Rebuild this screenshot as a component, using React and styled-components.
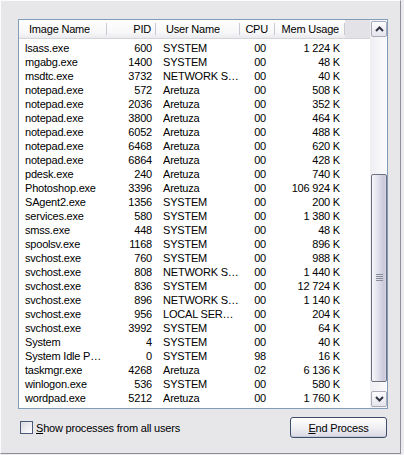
import React from "react";
import styled, { createGlobalStyle } from "styled-components";

const GlobalStyle = createGlobalStyle`
  html, body {
    margin: 0;
    padding: 0;
    background: #ececef;
  }
  body {
    font-family: "Liberation Sans", Arial, sans-serif;
    font-size: 11px;
    letter-spacing: -0.2px;
    color: #000;
  }
`;

// colonnes du tableau : largeur, alignement, marges du titre et des lignes
const columns = [
  { key: "name", title: "Image Name", width: 88, align: "left", headPad: 10, rowPad: 6 },
  { key: "pid", title: "PID", width: 49, align: "right", headPad: 5, rowPad: 4 },
  { key: "user", title: "User Name", width: 84, align: "left", headPad: 10, rowPad: 7 },
  { key: "cpu", title: "CPU", width: 35, align: "right", headPad: 7, rowPad: 9 },
  { key: "mem", title: "Mem Usage", width: 70, align: "right", headPad: 6, rowPad: 5 },
];

const processes = [
  ["lsass.exe", "600", "SYSTEM", "00", "1 224 K"],
  ["mgabg.exe", "1400", "SYSTEM", "00", "48 K"],
  ["msdtc.exe", "3732", "NETWORK S…", "00", "40 K"],
  ["notepad.exe", "572", "Aretuza", "00", "508 K"],
  ["notepad.exe", "2036", "Aretuza", "00", "352 K"],
  ["notepad.exe", "3800", "Aretuza", "00", "464 K"],
  ["notepad.exe", "6052", "Aretuza", "00", "488 K"],
  ["notepad.exe", "6468", "Aretuza", "00", "620 K"],
  ["notepad.exe", "6864", "Aretuza", "00", "428 K"],
  ["pdesk.exe", "240", "Aretuza", "00", "740 K"],
  ["Photoshop.exe", "3396", "Aretuza", "00", "106 924 K"],
  ["SAgent2.exe", "1356", "SYSTEM", "00", "200 K"],
  ["services.exe", "580", "SYSTEM", "00", "1 380 K"],
  ["smss.exe", "448", "SYSTEM", "00", "48 K"],
  ["spoolsv.exe", "1168", "SYSTEM", "00", "896 K"],
  ["svchost.exe", "760", "SYSTEM", "00", "988 K"],
  ["svchost.exe", "808", "NETWORK S…", "00", "1 440 K"],
  ["svchost.exe", "836", "SYSTEM", "00", "12 724 K"],
  ["svchost.exe", "896", "NETWORK S…", "00", "1 140 K"],
  ["svchost.exe", "956", "LOCAL SER…", "00", "204 K"],
  ["svchost.exe", "3992", "SYSTEM", "00", "64 K"],
  ["System", "4", "SYSTEM", "00", "40 K"],
  ["System Idle P…", "0", "SYSTEM", "98", "16 K"],
  ["taskmgr.exe", "4268", "Aretuza", "02", "6 136 K"],
  ["winlogon.exe", "536", "SYSTEM", "00", "580 K"],
  ["wordpad.exe", "5212", "Aretuza", "00", "1 760 K"],
];

const gridTemplate = columns.map((c) => c.width + "px").join(" ") + " 1fr";

export default function App() {
  return (
    <>
      <GlobalStyle />
      <Page>
        <TabPane>
          <ListBox>
            <ListArea>
              <HeaderRow>
                {columns.map((c) => (
                  <HeadCell key={c.key} $align={c.align} $pad={c.headPad}>
                    {c.title}
                  </HeadCell>
                ))}
                <HeadFiller />
              </HeaderRow>
              <Rows>
                {processes.map((p, i) => (
                  <Row key={i}>
                    {columns.map((c, j) => (
                      <Cell key={c.key} $align={c.align} $pad={c.rowPad}>
                        {p[j]}
                      </Cell>
                    ))}
                  </Row>
                ))}
              </Rows>
            </ListArea>
            <Scrollbar>
              <ScrollButton>
                <Arrow up />
              </ScrollButton>
              <Thumb style={{ marginTop: 137, height: 208 }}>
                <Grip />
              </Thumb>
              <ScrollButton $bottom>
                <Arrow />
              </ScrollButton>
            </Scrollbar>
          </ListBox>
          <Footer>
            <CheckLabel>
              <CheckBox />
              <span>
                <u>S</u>how processes from all users
              </span>
            </CheckLabel>
            <Button>
              <u>E</u>nd Process
            </Button>
          </Footer>
        </TabPane>
      </Page>
    </>
  );
}

function Arrow({ up }) {
  return (
    <svg width="9" height="6" viewBox="0 0 9 6">
      <path
        d={up ? "M1 5 L4.5 1.5 L8 5" : "M1 1 L4.5 4.5 L8 1"}
        fill="none"
        stroke="#303444"
        strokeWidth="2"
      />
    </svg>
  );
}

const Page = styled.div`
  width: 404px;
  height: 455px;
  overflow: hidden;
`;

const TabPane = styled.div`
  width: 401px;
  height: 454px;
  box-sizing: border-box;
  background: #e7e7ea;
  border-top: 1px solid #fbfbfc;
  border-left: 1px solid #fbfbfc;
  border-right: 1px solid #8e8f98;
  border-bottom: 1px solid #8e8f98;
  padding: 18px 0 0 17px;
  display: flex;
  flex-direction: column;
`;

const ListBox = styled.div`
  width: 370px;
  height: 390px;
  box-sizing: border-box;
  border: 1px solid #7f9db9;
  background: #fff;
  display: flex;
  overflow: hidden;
`;

const ListArea = styled.div`
  flex: 1;
  display: flex;
  flex-direction: column;
  overflow: hidden;
`;

const HeaderRow = styled.div`
  display: grid;
  grid-template-columns: ${gridTemplate};
  height: 18px;
  flex-shrink: 0;
  background: linear-gradient(#ffffff, #f7f7f9 70%, #ebebef);
  border-bottom: 1px solid #d4d4da;
`;

const HeadCell = styled.div`
  display: flex;
  align-items: center;
  justify-content: ${({ $align }) => ($align === "right" ? "flex-end" : "flex-start")};
  padding: ${({ $align, $pad }) => ($align === "right" ? `0 ${$pad}px 0 0` : `0 0 0 ${$pad}px`)};
  white-space: nowrap;
  background-image: linear-gradient(#c9c9d1, #c9c9d1);
  background-size: 1px 12px;
  background-position: right center;
  background-repeat: no-repeat;
`;

const HeadFiller = styled.div`
  background: #e3e3e7;
`;

const Rows = styled.div`
  padding-top: 2px;
  display: flex;
  flex-direction: column;
`;

const Row = styled.div`
  display: grid;
  grid-template-columns: ${gridTemplate};
  height: 14px;
  line-height: 14px;
  flex-shrink: 0;
`;

const Cell = styled.div`
  text-align: ${({ $align }) => $align};
  padding: ${({ $align, $pad }) => ($align === "right" ? `0 ${$pad}px 0 0` : `0 0 0 ${$pad}px`)};
  white-space: nowrap;
`;

const Scrollbar = styled.div`
  width: 17px;
  flex-shrink: 0;
  display: flex;
  flex-direction: column;
  background: linear-gradient(90deg, #eeeef3, #fbfbfd);
`;

const ScrollButton = styled.div`
  width: 16px;
  height: 16px;
  box-sizing: border-box;
  margin: ${({ $bottom }) => ($bottom ? "auto 0 1px 1px" : "1px 0 0 1px")};
  border: 1px solid #a9abb8;
  border-radius: 2px;
  background: linear-gradient(#fdfdfe, #e4e4ec);
  display: flex;
  align-items: center;
  justify-content: center;
`;

const Thumb = styled.div`
  width: 16px;
  margin-left: 1px;
  box-sizing: border-box;
  border: 1px solid #6c717e;
  border-radius: 2px;
  background: linear-gradient(90deg, #f6f6fb, #e2e2ee 40%, #c9c9dc 85%, #d6d6e4);
  display: flex;
  align-items: center;
  justify-content: center;
`;

const Grip = styled.div`
  width: 7px;
  height: 8px;
  background: repeating-linear-gradient(#8a8c9c 0 1px, transparent 1px 2px);
`;

const Footer = styled.div`
  margin-top: 8px;
  width: 370px;
  height: 21px;
  box-sizing: border-box;
  padding: 0 1px 0 2px;
  display: flex;
  align-items: center;
  justify-content: space-between;
`;

const CheckLabel = styled.label`
  display: flex;
  align-items: center;
  gap: 3px;
`;

const CheckBox = styled.span`
  width: 13px;
  height: 13px;
  box-sizing: border-box;
  border: 1px solid #4a5a78;
  background: linear-gradient(135deg, #d8d8e0, #f8f8fa 80%, #fff);
`;

const Button = styled.button`
  width: 97px;
  height: 21px;
  padding: 0;
  font-family: inherit;
  font-size: 11px;
  letter-spacing: inherit;
  color: #000;
  border: 1px solid #3e4d6c;
  border-radius: 3px;
  background: linear-gradient(#ffffff, #f0f0f4 50%, #d9d9e4);
  box-shadow: inset 0 -1px 0 #c8c8d6;
`;
